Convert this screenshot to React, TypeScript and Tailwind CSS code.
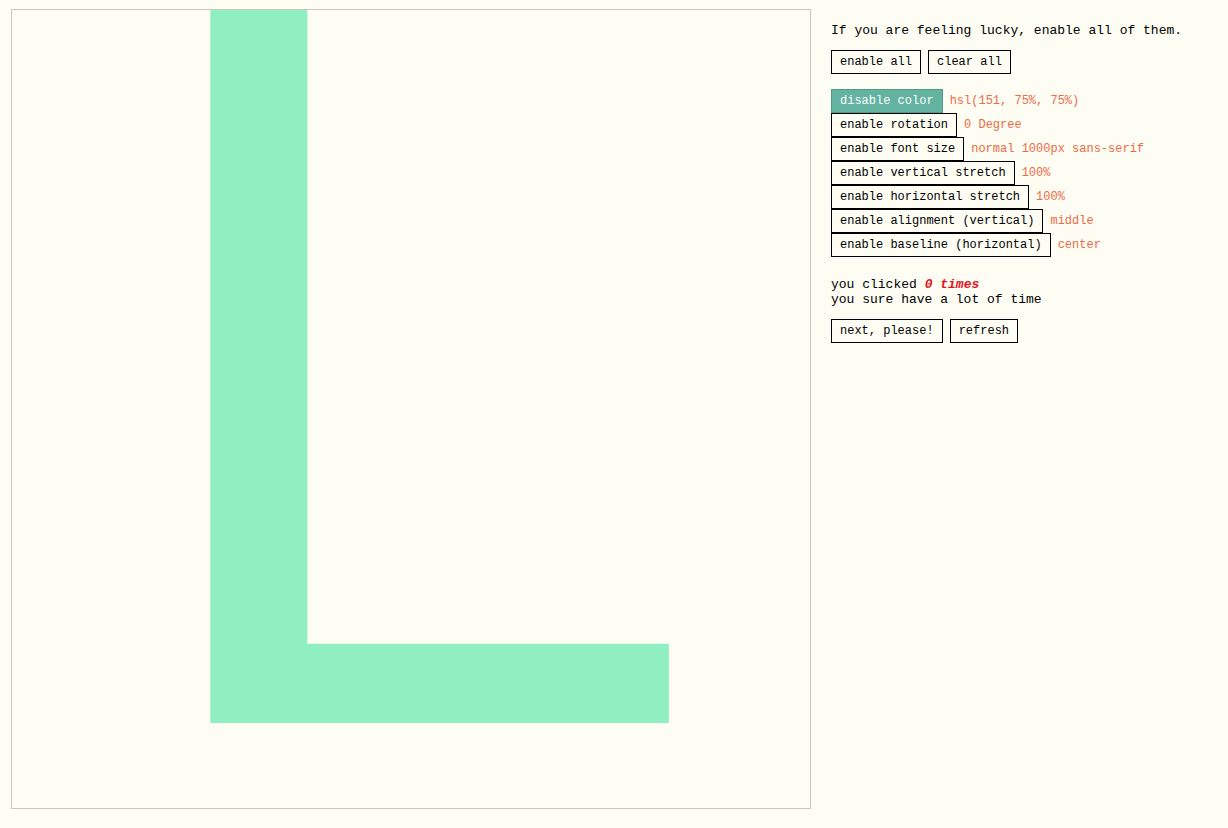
import React from "react";

const mono = { fontFamily: '"Liberation Mono", "Courier New", monospace' };

function Btn({ children, active }: { children: React.ReactNode; active?: boolean }) {
  return (
    <button
      className={
        active
          ? "h-[24px] px-2 border border-[#4f9c8a] bg-[#63b3a0] text-white text-[12px] leading-none flex items-center whitespace-pre"
          : "h-[24px] px-2 border border-black bg-transparent text-black text-[12px] leading-none flex items-center whitespace-pre"
      }
      style={mono}
    >
      {children}
    </button>
  );
}

const toggles: [string, string, boolean][] = [
  ["disable color", "hsl(151, 75%, 75%)", true],
  ["enable rotation", "0 Degree", false],
  ["enable font size", "normal 1000px sans-serif", false],
  ["enable vertical stretch", "100%", false],
  ["enable horizontal stretch", "100%", false],
  ["enable alignment (vertical)", "middle", false],
  ["enable baseline (horizontal)", "center", false],
];

export default function App() {
  return (
    <div className="min-h-[828px] w-full bg-[#fdfdf4] pt-[9px] pl-[11px] flex" style={mono}>
      <div className="relative w-[800px] h-[800px] shrink-0 border border-[#c8c8bc] overflow-hidden">
        <svg width="798" height="798" className="absolute left-0 top-0">
          <text
            x="113"
            y="713"
            fontSize="1040"
            fill="#8fefc1"
            style={{ fontFamily: '"Liberation Sans", Arial, sans-serif' }}
          >
            L
          </text>
        </svg>
      </div>
      <div className="ml-[20px] flex flex-col text-black">
        <div className="mt-[14px] text-[13px] leading-[15px]">
          If you are feeling lucky, enable all of them.
        </div>
        <div className="mt-[12px] flex gap-[7px]">
          <Btn>enable all</Btn>
          <Btn>clear all</Btn>
        </div>
        <div className="mt-[15px] flex flex-col">
          {toggles.map(([label, status, active]) => (
            <div key={label} className="flex items-center h-[24px]">
              <Btn active={active}>{label}</Btn>
              <span className="ml-[7px] text-[12px] text-[#ec6a45]">{status}</span>
            </div>
          ))}
        </div>
        <div className="mt-[20px] text-[13px] leading-[15px]">
          you clicked <b className="italic text-[#e3121b]">0 times</b>
        </div>
        <div className="text-[13px] leading-[15px]">you sure have a lot of time</div>
        <div className="mt-[12px] flex gap-[7px]">
          <Btn>next, please!</Btn>
          <Btn>refresh</Btn>
        </div>
      </div>
    </div>
  );
}
